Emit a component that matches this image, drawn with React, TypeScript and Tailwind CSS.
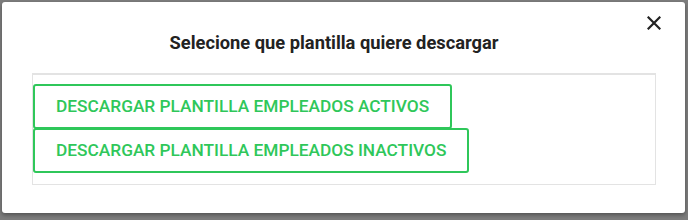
import React from "react";

export default function App() {
  return (
    <div className="w-[688px] h-[220px] bg-[#7d7d7d] pt-[2px] pl-[2px] overflow-hidden" style={{ fontFamily: "Roboto, 'Liberation Sans', sans-serif" }}>
      <div className="relative w-[683px] h-[211px] bg-white rounded-[3px] shadow-[0_2px_4px_rgba(0,0,0,0.35)] flex flex-col">
        <button className="absolute top-[12px] right-[22px] w-[18px] h-[18px] flex items-center justify-center text-[#222]">
          <svg width="14" height="14" viewBox="0 0 14 14" fill="none" stroke="currentColor" strokeWidth="2.2" strokeLinecap="square">
            <path d="M1.5 1.5 L12.5 12.5 M12.5 1.5 L1.5 12.5" />
          </svg>
        </button>
        <h2 className="mt-[30px] pr-[19px] h-[22px] leading-[22px] text-center text-[18.3px] font-bold text-[#222]">
          Selecione que plantilla quiere descargar
        </h2>
        <div className="mt-[19px] ml-[30px] w-[624px] h-[112px] border border-[#e3e3e3] border-t-2 pt-[9px] flex flex-col items-start">
          <button className="h-[45px] px-[21px] border-2 border-[#2fc75a] rounded-[3px] text-[#2fc75a] text-[17.3px] font-medium leading-none uppercase">
            Descargar plantilla empleados activos
          </button>
          <button className="-mt-[1px] h-[45px] px-[21px] border-2 border-[#2fc75a] rounded-[3px] text-[#2fc75a] text-[17.3px] font-medium leading-none uppercase">
            Descargar plantilla empleados inactivos
          </button>
        </div>
      </div>
    </div>
  );
}
